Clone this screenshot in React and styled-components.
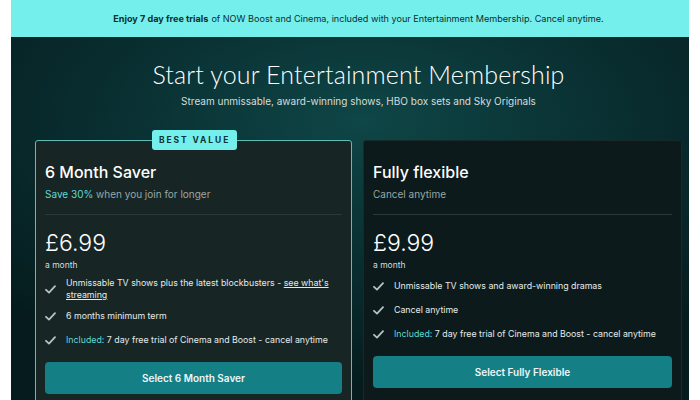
import React from 'react';
import styled, { createGlobalStyle } from 'styled-components';

const GlobalStyle = createGlobalStyle`
  html, body { margin: 0; padding: 0; background: #ffffff; }
  body { font-family: Inter, "Noto Sans", "Liberation Sans", sans-serif; }
`;

const Page = styled.div`
  margin: 0 11px;
  height: 400px;
  overflow: hidden;
  display: flex;
  flex-direction: column;
`;

const Banner = styled.div`
  height: 37px;
  flex-shrink: 0;
  padding-left: 17px;
  display: flex;
  align-items: center;
  justify-content: center;
  background: #75efec;
  color: #0e2d2f;
  font-size: 9.1px;
  strong { font-weight: 700; margin-right: 3px; }
`;

const Hero = styled.div`
  flex: 1;
  padding-left: 17px;
  display: flex;
  flex-direction: column;
  align-items: center;
  background: radial-gradient(ellipse 75% 70% at 52% 22%, #0f4647 0%, #0a3133 45%, #051b1d 100%);
  color: #ffffff;
`;

const Title = styled.h1`
  margin: 22px 0 0;
  font-family: Lato, Inter, sans-serif;
  font-weight: 300;
  font-size: 25px;
  line-height: 30px;
  letter-spacing: 0.15px;
`;

const Subtitle = styled.p`
  margin: 5px 0 0;
  font-size: 10px;
  line-height: 14px;
  color: #d4dddd;
`;

const Cards = styled.div`
  align-self: stretch;
  display: grid;
  grid-template-columns: 317px 319px;
  gap: 11px;
  padding: 0 7px;
  margin-top: 32px;
`;

const Card = styled.div`
  position: relative;
  height: 280px;
  box-sizing: border-box;
  padding: 20px 9px 0;
  border-radius: 3px;
  background: ${({ $best }) => ($best ? '#172525' : '#0c1a1b')};
  border: 1px solid ${({ $best }) => ($best ? '#5fbdb8' : '#17292a')};
  display: flex;
  flex-direction: column;
`;

const Badge = styled.div`
  position: absolute;
  top: -11px;
  left: 116px;
  height: 20px;
  padding: 0 7px;
  border-radius: 3px;
  background: #75efec;
  color: #0d3436;
  font-size: 8.5px;
  font-weight: 700;
  letter-spacing: 1.9px;
  display: flex;
  align-items: center;
`;

const PlanName = styled.h2`
  margin: 0;
  font-size: 16px;
  font-weight: 500;
  line-height: 22px;
`;

const PlanSub = styled.p`
  margin: 4px 0 0;
  font-size: 10px;
  line-height: 14px;
  color: #9aa6a6;
`;

const Accent = styled.span`
  color: #5fd8d3;
`;

const Link = styled.span`
  text-decoration: underline;
`;

const Divider = styled.hr`
  margin: 13px 0 0;
  border: 0;
  border-top: 1px solid #2a3a3a;
`;

const Price = styled.div`
  margin-top: 14px;
  font-size: 23px;
  font-weight: 300;
  line-height: 28px;
`;

const Per = styled.div`
  margin-top: 2px;
  font-size: 8.5px;
  line-height: 12px;
  color: #d6dede;
`;

const Features = styled.ul`
  list-style: none;
  margin: 6px 0 0;
  padding: 0;
  display: flex;
  flex-direction: column;
  gap: 6px;
`;

const Feature = styled.li`
  min-height: 18px;
  display: flex;
  align-items: center;
  gap: 10px;
  font-size: 8.8px;
  line-height: 12px;
  color: #e4eaea;
`;

const CheckWrap = styled.span`
  width: 11px;
  flex-shrink: 0;
  display: flex;
`;

const SelectButton = styled.button`
  margin-top: 13px;
  height: 32px;
  border: 0;
  border-radius: 4px;
  background: #157f86;
  color: #eef6f6;
  font-family: inherit;
  font-size: 10px;
  font-weight: 600;
`;

const plans = [
  {
    name: '6 Month Saver',
    highlight: 'Save 30%',
    sub: ' when you join for longer',
    price: '£6.99',
    best: true,
    features: [
      <>Unmissable TV shows plus the latest blockbusters - <Link>see what's streaming</Link></>,
      <>6 months minimum term</>,
      <><Accent>Included:</Accent> 7 day free trial of Cinema and Boost - cancel anytime</>,
    ],
    cta: 'Select 6 Month Saver',
  },
  {
    name: 'Fully flexible',
    sub: 'Cancel anytime',
    price: '£9.99',
    features: [
      <>Unmissable TV shows and award-winning dramas</>,
      <>Cancel anytime</>,
      <><Accent>Included:</Accent> 7 day free trial of Cinema and Boost - cancel anytime</>,
    ],
    cta: 'Select Fully Flexible',
  },
];

const Check = () => (
  <svg width="11" height="9" viewBox="0 0 11 9" fill="none">
    <path d="M1 4.8 L4 7.6 L10 1.2" stroke="#b9c2c2" strokeWidth="1.8" strokeLinecap="round" strokeLinejoin="round" />
  </svg>
);

const App = () => (
  <Page>
    <GlobalStyle />
    <Banner>
      <strong>Enjoy 7 day free trials</strong> of NOW Boost and Cinema, included with your Entertainment Membership. Cancel anytime.
    </Banner>
    <Hero>
      <Title>Start your Entertainment Membership</Title>
      <Subtitle>Stream unmissable, award-winning shows, HBO box sets and Sky Originals</Subtitle>
      <Cards>
        {plans.map((p) => (
          <Card key={p.name} $best={p.best}>
            {p.best && <Badge>BEST VALUE</Badge>}
            <PlanName>{p.name}</PlanName>
            <PlanSub>
              {p.highlight && <Accent>{p.highlight}</Accent>}
              {p.sub}
            </PlanSub>
            <Divider />
            <Price>{p.price}</Price>
            <Per>a month</Per>
            <Features>
              {p.features.map((f, i) => (
                <Feature key={i}>
                  <CheckWrap><Check /></CheckWrap>
                  <span>{f}</span>
                </Feature>
              ))}
            </Features>
            <SelectButton>{p.cta}</SelectButton>
          </Card>
        ))}
      </Cards>
    </Hero>
  </Page>
);

export default App;
